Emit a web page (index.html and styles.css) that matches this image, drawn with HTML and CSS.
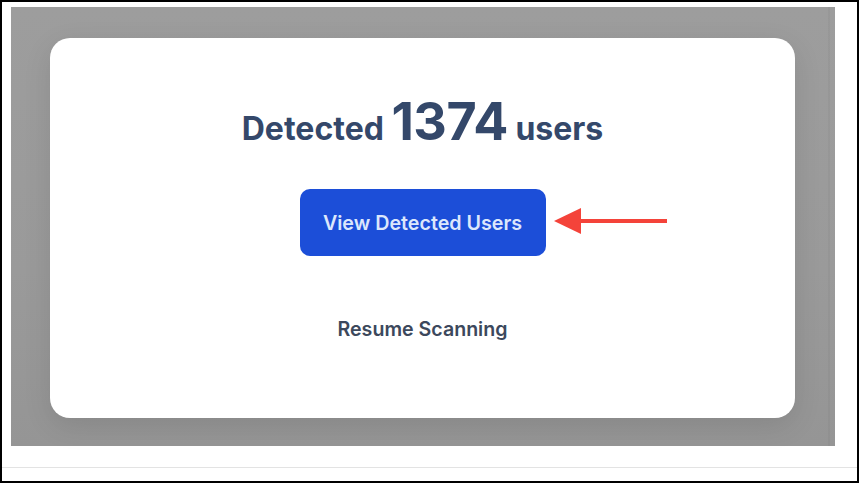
FILE: index.html
```html
<!DOCTYPE html>
<html>
<head>
<meta charset="utf-8">
<link rel="stylesheet" href="styles.css">
</head>
<body>
<div class="frame">
  <div class="backdrop">
    <div class="card">
      <h1 class="title">Detected <span class="count">1374</span> users</h1>
      <div class="action">
        <button class="primary">View Detected Users</button>
        <svg class="arrow" width="114" height="26" viewBox="0 0 114 26">
          <polygon points="0,13 27,0 27,26" fill="#f4433a"/>
          <rect x="24" y="11" width="89" height="4" fill="#f4433a"/>
        </svg>
      </div>
      <button class="secondary">Resume Scanning</button>
    </div>
  </div>
  <div class="rule"></div>
</div>
</body>
</html>
```
FILE: styles.css
```css
* { box-sizing: border-box; }
html, body { margin: 0; padding: 0; background: #fff; }
body { font-family: Inter, "Noto Sans", sans-serif; }

.frame {
  width: 859px;
  height: 483px;
  border: 2px solid #000;
  display: flex;
  flex-direction: column;
  background: #fff;
}

.backdrop {
  margin: 5px 22px 0 9px;
  height: 439px;
  padding: 31px 40px 28px 39px;
  background:
    linear-gradient(90deg, transparent 817px, rgba(0,0,0,0.035) 817px, rgba(0,0,0,0.035) 819px, transparent 819px),
    linear-gradient(180deg, #9d9d9d 0%, #9a9a9a 60%, #959595 100%);
}

.card {
  height: 380px;
  background: #fff;
  border-radius: 20px;
  box-shadow: 0 8px 28px rgba(0,0,0,0.10);
  display: flex;
  flex-direction: column;
  align-items: center;
  padding-top: 56px;
}

.title {
  margin: 0;
  font-size: 32px;
  font-weight: 700;
  color: #34486a;
  letter-spacing: 0;
  line-height: 56px;
  height: 56px;
}
.count {
  font-size: 52px;
  letter-spacing: -0.5px;
}

.action {
  position: relative;
  margin-top: 39px;
}

.primary {
  display: block;
  width: 246px;
  height: 67px;
  border: none;
  border-radius: 10px;
  background: #1c4ed8;
  color: #dce7fc;
  font-family: Inter, "Noto Sans", sans-serif;
  font-size: 19.7px;
  font-weight: 600;
  cursor: pointer;
}

.arrow {
  position: absolute;
  left: calc(100% + 8px);
  top: 19px;
}

.secondary {
  margin-top: 57px;
  border: none;
  background: transparent;
  color: #3c485c;
  font-family: Inter, "Noto Sans", sans-serif;
  font-size: 19.6px;
  font-weight: 600;
  padding: 4px 8px;
  line-height: 24px;
}

.rule {
  margin-top: 21px;
  height: 1px;
  background: #e3e3e3;
}
```
